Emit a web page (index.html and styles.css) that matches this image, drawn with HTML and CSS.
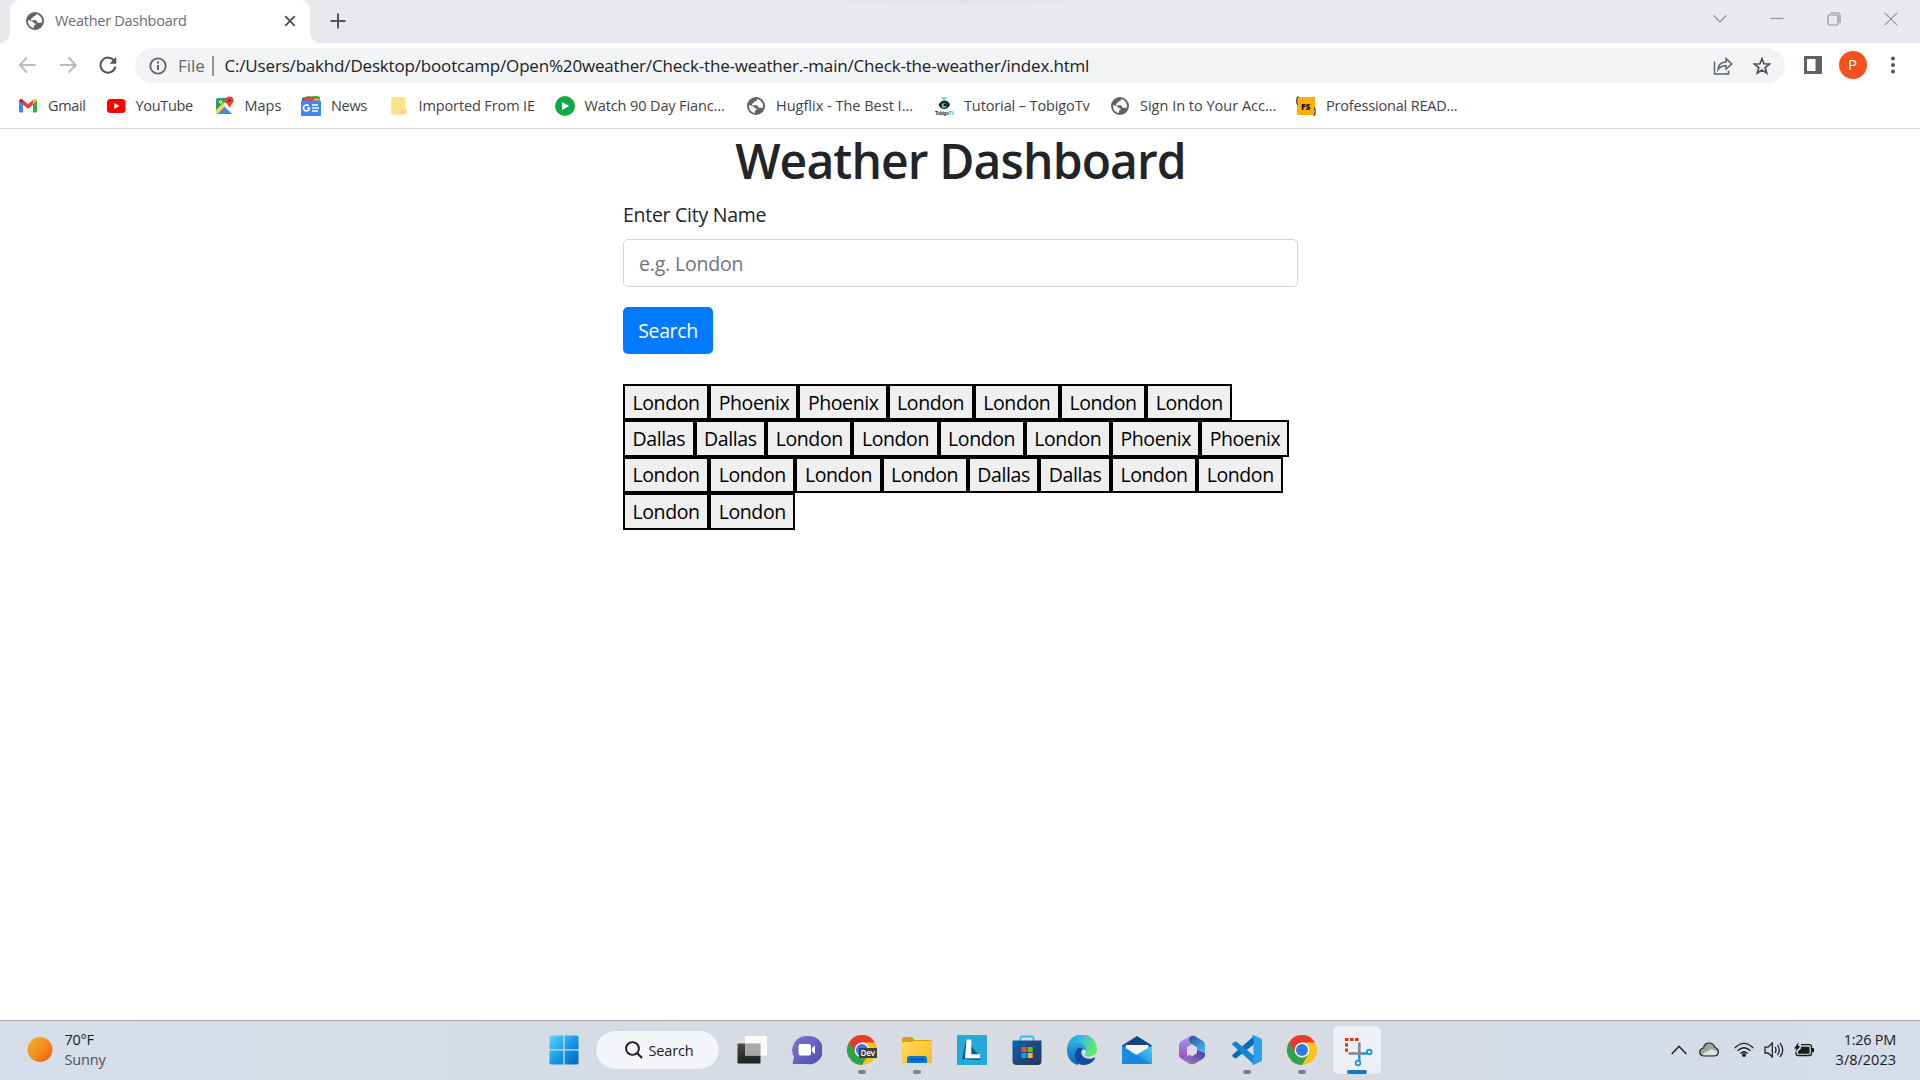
FILE: index.html
```html
<!DOCTYPE html>
<html lang="en">
<head>
<meta charset="utf-8">
<title>Weather Dashboard</title>
<link rel="stylesheet" href="styles.css">
</head>
<body>
<svg class="defs" width="0" height="0" aria-hidden="true">
  <defs>
    <symbol id="globe" viewBox="0 0 20 20">
      <circle cx="10" cy="10" r="9" fill="#5f6368"/>
      <path d="M11.2 2.9c-.3 1.4-1 2.2-2.4 2.4-.8.2-.8 1.100-1.300 1.700-.5.5-1.500.3-1.600 1.200 0 .9.9 1 1.900 1h2.700c.9 0 1.400.6 1.500 1.500.1.900 1 1.100 1.900 1.100h2.900a7.200 7.200 0 0 0-5.600-8.900zM2.900 9.300a7.200 7.200 0 0 0 6 7.800v-1.600c0-.8.6-1.200 1.300-1.400.7-.3.7-1.300 0-1.700l-1.700-.7c-.9-.5-.9-1.600-1.900-1.900z" fill="#fff"/>
    </symbol>
    <linearGradient id="win" x1="0" y1="0" x2="1" y2="1"><stop offset="0" stop-color="#5ad6fb"/><stop offset=".55" stop-color="#1496e4"/><stop offset="1" stop-color="#0067c5"/></linearGradient>
    <linearGradient id="sun" x1="0" y1="0" x2="1" y2="1"><stop offset="0" stop-color="#f2b632"/><stop offset=".5" stop-color="#f58d1e"/><stop offset="1" stop-color="#ee5c07"/></linearGradient>
    <linearGradient id="dark" x1="0" y1="0" x2="0" y2="1"><stop offset="0" stop-color="#4a4a4a"/><stop offset="1" stop-color="#1f1f1f"/></linearGradient>
    <linearGradient id="chat" x1="0" y1="0" x2="1" y2="1"><stop offset="0" stop-color="#8377c8"/><stop offset=".5" stop-color="#6660c4"/><stop offset="1" stop-color="#4f4db4"/></linearGradient>
    <linearGradient id="folder" x1="0" y1="0" x2="1" y2="1"><stop offset="0" stop-color="#ffdc62"/><stop offset="1" stop-color="#fdb81f"/></linearGradient>
    <linearGradient id="store" x1="0" y1="0" x2="1" y2="1"><stop offset="0" stop-color="#0c62ae"/><stop offset="1" stop-color="#273459"/></linearGradient>
    <linearGradient id="edgeTop" x1="0" y1="0" x2="1" y2=".3"><stop offset="0" stop-color="#2696dc"/><stop offset=".5" stop-color="#31c2dc"/><stop offset="1" stop-color="#66e46c"/></linearGradient>
    <linearGradient id="edgeLow" x1="0" y1="0" x2="0" y2="1"><stop offset="0" stop-color="#2ba8e4"/><stop offset="1" stop-color="#0f5fbd"/></linearGradient>
    <linearGradient id="mail" x1="1" y1="0" x2="0" y2="1"><stop offset="0" stop-color="#44d2fa"/><stop offset="1" stop-color="#157fdb"/></linearGradient>
    <linearGradient id="m1" x1="0" y1="0" x2="0" y2="1"><stop offset="0" stop-color="#a79af0"/><stop offset="1" stop-color="#9a4fbb"/></linearGradient>
    <linearGradient id="m2" x1="0" y1="0" x2=".6" y2="1"><stop offset="0" stop-color="#264f95"/><stop offset="1" stop-color="#4bc4fa"/></linearGradient>
    <linearGradient id="m3" x1="0" y1="1" x2="1" y2="0"><stop offset="0" stop-color="#b97fd0"/><stop offset="1" stop-color="#443c9b"/></linearGradient>
    <symbol id="chrome" viewBox="0 0 30 30">
      <circle cx="15" cy="15" r="15" fill="#fcc21b"/>
      <path d="M2 7.500 8.500 18.750 15 15 15 7.500H28A15 15 0 0 0 2 7.500z" fill="#e33b2e"/>
      <path d="M2 7.500 8.500 18.750Q12 22.500 15 22.500L21.500 18.750 15 30A15 15 0 0 1 2 7.500z" fill="#2ba24c"/>
      <circle cx="15" cy="15" r="7.400" fill="#fff"/><circle cx="15" cy="15" r="6" fill="#3079e8"/>
    </symbol>
  </defs>
</svg>

<div class="screen">
  <header class="browser">
    <div class="tabstrip">
      <div class="tab">
        <svg class="tab__icon" width="20" height="20"><use href="#globe"/></svg>
        <span class="tab__title">Weather Dashboard</span>
        <svg width="12" height="12" viewBox="0 0 12 12" stroke="#4c4f54" stroke-width="1.900"><path d="M1.200 1.200 10.800 10.800M10.800 1.200 1.200 10.800"/></svg>
      </div>
      <svg class="newtab" width="16" height="16" viewBox="0 0 16 16" stroke="#54575b" stroke-width="2"><path d="M8 .5V15.500M.5 8H15.500"/></svg>
      <div class="window-controls">
        <svg width="14" height="14" viewBox="0 0 14 14"><path d="m.7 3.500 6.300 6.500 6.300-6.500"/></svg>
        <svg width="14" height="14" viewBox="0 0 14 14"><path d="M.5 6.500h13"/></svg>
        <svg width="14" height="14" viewBox="0 0 14 14"><rect x="1" y="3" width="10" height="10" rx="1.500"/><path d="M3 1h7.500q2.500 0 2.500 2.500V11"/></svg>
        <svg width="14" height="14" viewBox="0 0 14 14"><path d="M.8.8 13.200 13.200M13.200.8.8 13.200"/></svg>
      </div>
    </div>
    <div class="toolbar">
      <div class="nav">
        <svg width="18" height="18" viewBox="0 0 18 18" stroke="#b9bbbe"><path d="M17.500 9H2M9 1.500 1.700 9 9 16.500"/></svg>
        <svg width="18" height="18" viewBox="0 0 18 18" stroke="#b9bbbe"><path d="M1 9h15.500M9.500 1.500 16.800 9l-7.300 7.500"/></svg>
        <svg width="18" height="18" viewBox="0 0 18 18" stroke="#505357"><path d="M15.300 5A7.500 7.500 0 1 0 16.400 10.500"/><path d="M17.300.8V7.700H10.400z" fill="#505357" stroke="none"/></svg>
      </div>
      <div class="address">
        <svg width="18" height="18" viewBox="0 0 18 18" fill="none" stroke="#5f6368" stroke-width="1.800"><circle cx="9" cy="9" r="7.700"/><path d="M9 8v5M9 4.600v2" stroke-width="2"/></svg>
        <span class="address__scheme">File</span>
        <span class="address__url">C:/Users/bakhd/Desktop/bootcamp/Open%20weather/Check-the-weather.-main/Check-the-weather/index.html</span>
        <svg class="address__share" width="20" height="18" viewBox="0 0 20 18" fill="none" stroke="#5f6368" stroke-width="1.500"><path d="M1.500 4.500V17H15.500V13.500M5 12.500C5.300 8 8.500 5.200 13 5V1.500L18.700 7 13 12V8.700C9.500 8.700 7 9.500 5 12.500z"/></svg>
        <svg width="18" height="18" viewBox="0 0 18 18" fill="none" stroke="#505357" stroke-width="1.700"><path d="m9 1.700 2 5.100 5.500.3-4.300 3.500 1.500 5.400L9 13l-4.700 3 1.500-5.400L1.500 7.100 7 6.800z"/></svg>
      </div>
      <svg class="panel-icon" width="18" height="18" viewBox="0 0 18 18"><path d="M0 0h18v18H0zM3 3v12h8.500V3z" fill="#5f6368" fill-rule="evenodd"/></svg>
      <span class="avatar">P</span>
      <svg class="menu-icon" width="4" height="18" viewBox="0 0 4 18" fill="#505357"><circle cx="2" cy="2.500" r="2"/><circle cx="2" cy="9" r="2"/><circle cx="2" cy="15.500" r="2"/></svg>
    </div>
    <nav class="bookmarks">
      <span class="bookmark bookmark--tight"><svg width="20" height="20" viewBox="0 0 20 20"><path d="M1 4v11.500q0 1 1 1h3V8z" fill="#4285f4"/><path d="M19 4v11.500q0 1-1 1h-3V8z" fill="#34a853"/><path d="m1 4.800 4 3.300v-4L3.500 3Q1.500 2.500 1 4.800z" fill="#c5221f"/><path d="m5 4.100 5 3.800 5-3.800v4.700l-5 3.900-5-3.900z" fill="#ea4335"/><path d="m19 4.800-4 3.300v-4L16.500 3q2-.5 2.500 1.800z" fill="#fbbc04"/></svg>Gmail</span>
      <span class="bookmark bookmark--tight"><svg width="20" height="20" viewBox="0 0 20 20"><rect x="1" y="3" width="18.500" height="14" rx="3.500" fill="#f00"/><path d="m8.300 7 5 3-5 3z" fill="#fff"/></svg>YouTube</span>
      <span class="bookmark"><svg width="20" height="20" viewBox="0 0 20 20"><rect x="1" y="2" width="16" height="16" rx="2" fill="#2a9d58"/><path d="m1 18 16-16v16z" fill="#e8e9eb"/><path d="m1.500 18 7.500-7.500 8 7.500z" fill="#4285f4"/><path d="m1 14 8-8 3.500 2L3 17.500 1 18z" fill="#fdd44a"/><path d="m8.500 8 8.500 9v-4l-6-6z" fill="#fff"/><path d="M7.500 5.800H5.900v.8h.8a1.300 1.300 0 1 1-.3-1.700" fill="none" stroke="#fff"/><path d="M14.500 12.500C14 9 10.500 7.500 10.500 4.500a4 4 0 0 1 8 0c0 3-3.500 4.500-4 8z" fill="#e84235"/><circle cx="14.500" cy="4.500" r="1.500" fill="#8c1f18"/></svg>Maps</span>
      <span class="bookmark bookmark--tight"><svg width="20" height="20" viewBox="0 0 20 20"><path d="M1 2 9 0v6H1z" fill="#188038"/><path d="M4 .8 16 0l3 1v5H5z" fill="#34a853"/><path d="m3 1.500 11-.8V6H3z" fill="#ea4335"/><path d="M13 2.500 19 3l-1 4h-6z" fill="#fbbc04"/><rect y="4.500" width="20" height="15.500" rx="1" fill="#4285f4"/><path d="M6 12h2.500a3 3 0 1 1-.9-2.200M11 9h6M11 12h7M11 15h6" fill="none" stroke="#fff" stroke-width="1.700"/></svg>News</span>
      <span class="bookmark bookmark--snug"><svg width="20" height="20" viewBox="0 0 20 20"><path d="M3.500 1h11q2 0 2 2v9.500h1v4.500q0 1.500-1.500 1.500H3.500q-1.500 0-1.500-1.500V3q0-2 1.500-2z" fill="#ffe28a"/><path d="M13.500 18v-3.500h3V18" fill="none" stroke="#f4cf62"/></svg>Imported From IE</span>
      <span class="bookmark bookmark--snug"><svg width="20" height="20" viewBox="0 0 20 20"><circle cx="10" cy="10" r="10" fill="#0cab45"/><path d="m7 6 7.200 4L7 14z" fill="#fff"/></svg>Watch 90 Day Fianc...</span>
      <span class="bookmark"><svg width="20" height="20"><use href="#globe"/></svg>Hugflix - The Best I...</span>
      <span class="bookmark bookmark--snug"><svg width="20" height="20" viewBox="0 0 20 20"><path d="M10 5V1M7.500 1.500 10 3l2.500-1.500" stroke="#37c6aa" fill="none"/><path d="M4.500 9Q7 4 11 4.500q4 .5 5 4.500-2 4-6 4-3.500 0-5.500-4z" fill="#17292d"/><circle cx="10" cy="9.500" r="2.500" fill="#36cfb6"/><circle cx="11" cy="9" r="1.300" fill="#111"/><text x="1" y="18.800" class="tobigo">Tobigo<tspan fill="#2bd0b0">TV</tspan></text></svg>Tutorial – TobigoTv</span>
      <span class="bookmark"><svg width="20" height="20"><use href="#globe"/></svg>Sign In to Your Acc...</span>
      <span class="bookmark bookmark--wide"><svg width="20" height="20" viewBox="0 0 20 20"><path d="M1 1h18v18H1z" fill="#ffb000"/><path d="M2.500.5q-1.500 0-1.500 2V4L.3 5 1 6v1.500q0 1 1 1M18 11.500q1 0 1 1.500v1.500l.7 1-.7 1V18q0 1.500-1.500 1.500" fill="none" stroke="#171717"/><text x="5" y="13.500" class="fs">FS</text></svg>Professional READ...</span>
    </nav>
  </header>

  <main class="page">
    <div class="column">
      <h1 class="heading">Weather Dashboard</h1>
      <label class="label" for="city">Enter City Name</label>
      <input class="field" id="city" type="text" placeholder="e.g. London">
      <button class="search" type="button">Search</button>
      <div class="history">
        <div class="history__row"><button class="city city--london">London</button><button class="city city--phoenix">Phoenix</button><button class="city city--phoenix">Phoenix</button><button class="city city--london">London</button><button class="city city--london">London</button><button class="city city--london">London</button><button class="city city--london">London</button></div>
        <div class="history__row"><button class="city city--dallas">Dallas</button><button class="city city--dallas">Dallas</button><button class="city city--london">London</button><button class="city city--london">London</button><button class="city city--london">London</button><button class="city city--london">London</button><button class="city city--phoenix">Phoenix</button><button class="city city--phoenix">Phoenix</button></div>
        <div class="history__row"><button class="city city--london">London</button><button class="city city--london">London</button><button class="city city--london">London</button><button class="city city--london">London</button><button class="city city--dallas">Dallas</button><button class="city city--dallas">Dallas</button><button class="city city--london">London</button><button class="city city--london">London</button></div>
        <div class="history__row"><button class="city city--london">London</button><button class="city city--london">London</button></div>
      </div>
    </div>
  </main>

  <footer class="taskbar">
    <div class="weather">
      <svg width="26" height="26" viewBox="0 0 26 26"><circle cx="13" cy="12.500" r="12.500" fill="url(#sun)"/></svg>
      <div class="weather__text"><span class="weather__temp">70°F</span><span class="weather__sky">Sunny</span></div>
    </div>
    <div class="apps">
      <div class="app app--start"><svg width="30" height="30" viewBox="0 0 30 30"><path d="M.5 2q0-1.500 1.500-1.500h12.300v13.800H.5zM15.600.5H28q1.500 0 1.500 1.500v12.300H15.600zM.5 15.600h13.800v13.900H2q-1.500 0-1.500-1.500zM15.600 15.600h13.900V28q0 1.500-1.500 1.500H15.600z" fill="url(#win)"/></svg></div>
      <div class="pill"><svg width="18" height="18" viewBox="0 0 18 18" fill="none" stroke="#1b1b1b" stroke-width="1.900"><circle cx="7.500" cy="7.500" r="6.400"/><path d="m12 12 5 5"/></svg><span class="pill__text">Search</span></div>
      <div class="app"><svg width="30" height="30" viewBox="0 0 30 30"><rect x=".5" y="8.500" width="23" height="20" rx="1" fill="url(#dark)"/><rect x="8" y="1" width="22" height="19.500" rx="1" fill="#fff" fill-opacity=".85"/><path d="M8 8.500h15.500v12H8z" fill="#a9a9a7"/></svg></div>
      <div class="app"><svg width="30" height="30" viewBox="0 0 30 30"><path d="M15 1a14.200 14.200 0 1 1-1 28H1.500q-1.200 0-.8-1.200L2 22A14.200 14.200 0 0 1 15 1z" fill="url(#chat)"/><rect x="6.500" y="9" width="12.500" height="11.500" rx="2" fill="#fff"/><path d="m20 13 3-2.500v8.500l-3-2.500z" fill="#fff"/></svg></div>
      <div class="app app--running"><svg width="30" height="30" viewBox="0 0 30 30"><use href="#chrome"/><rect x="12" y="13" width="18" height="10" fill="#3c4043"/><text x="13.400" y="20.800" class="dev">Dev</text></svg></div>
      <div class="app app--running"><svg width="30" height="30" viewBox="0 0 30 30"><path d="M0 4q0-2 2-2h8l2.500 3H28q2 0 2 2v5H0z" fill="#dda108"/><path d="M0 8.500Q0 7 2 7h8l3-1h16q1 0 1 1.500v19.500q0 1-1 1H1q-1 0-1-1z" fill="url(#folder)"/><path d="M5 28v-4.500q0-2.500 2.500-2.500h15q2.500 0 2.500 2.500V28z" fill="#0b79cf"/><path d="M8 24.500h14" stroke="#054785" stroke-width="1.500"/></svg></div>
      <div class="app"><svg width="30" height="30" viewBox="0 0 30 30"><path d="M0 0h30v30H0z" fill="#25a9da"/><path d="m9 5-4 19 18.500 1-1-4z" fill="#075d8b"/><path d="M9.500 4.500h4.800v14.800H23v4H8z" fill="#fff"/></svg></div>
      <div class="app"><svg width="30" height="30" viewBox="0 0 30 30"><path d="M8.500 6V3q0-1.500 1.500-1.500h10q1.500 0 1.500 1.500v3" fill="none" stroke="#32bdef" stroke-width="1.800"/><path d="M.5 5.500h29V26q0 4-4 4h-21q-4 0-4-4z" fill="url(#store)"/><path d="M9.500 12H14.500v5h-5z" fill="#f25022"/><path d="M15.700 12h5v5h-5z" fill="#7fba00"/><path d="M9.500 18h5v5h-5z" fill="#00a4ef"/><path d="M15.700 18h5v5h-5z" fill="#ffb900"/></svg></div>
      <div class="app"><svg width="30" height="30" viewBox="0 0 30 30"><path d="M0 14.500A15 15 0 0 1 30 14c0 5-4 7.500-8.500 7.500-3.500 0-5-1.500-4-3 2-3 0-6.500-5-6.500z" fill="url(#edgeTop)"/><path d="M0 15C1 10 5 7.500 9.500 7.500c6 0 10 4 9.500 8-.3 1.500-1.500 2-1.500 3.300L11 30C4 28.500 0 22.500 0 15z" fill="url(#edgeLow)"/><path d="M12.500 12.500C6 15.500 6 25.500 13.500 29.800 19.500 31 25.500 28 28 23.500c.5-1-.3-1.200-1-.8-5 2.500-11 .8-12.500-3.400-1-2.500.2-5 1.500-6z" fill="#0e4e9a"/><path d="M16 14.500q3-.5 3 2-.3 1.300-1.300 2.300-.8 2 2.300 2.600-4.500 1-5.500-2.600-.5-2.800 1.500-4.300z" fill="#d7dbe3"/></svg></div>
      <div class="app"><svg width="30" height="30" viewBox="0 0 30 30"><path d="M0 10.500 15 1l15 9.500v3H0z" fill="#0f4887"/><path d="M3.500 10h23v10h-23z" fill="#f4f4f3"/><path d="M0 10.500 17 22 30 29H0z" fill="#1b8de0"/><path d="M30 10.500V29L13 20.800z" fill="url(#mail)"/><path d="M0 29 13.500 19 30 29z" fill="#1686dc" fill-opacity=".6"/></svg></div>
      <div class="app"><svg width="30" height="30" viewBox="0 0 30 30"><path d="M13.500 1 4 6.300Q2 7.500 2 10v10q0 2.500 2 3.500 2 1 4 0 2-1.200 2-3.500v-7.500l5-3.200L19 6V2Q16 0 13.500 1z" fill="url(#m1)"/><path d="M14.500 1q2-.6 4 .5L26 6q2 1.200 2 3.700V20q0 2-1.500 3.200L20 19v-6.500l-5-3.200Q12 7.500 12 4.500 12 2 14.500 1z" fill="url(#m2)"/><path d="M28 18v2q0 2.500-2 3.700l-8.500 5q-2.500 1.200-5 0L4 23.700 3 22.500q2.500 1.500 5 0l7-4.300 5-3z" fill="url(#m3)"/><path d="m15 9.300 5 3.200v5.700l-5 3-5-3v-5.700z" fill="#d8dbe2"/></svg></div>
      <div class="app app--running"><svg width="30" height="30" viewBox="0 0 30 30"><path d="m22 1 1 7.500L4.500 23q-1 .7-2 0L.6 21.500Q-.2 20.500.6 19.800z" fill="#0b69b4"/><path d="m22 29.500 1-8L4.500 6.800q-1-.6-2 0L.6 8.300q-.8 1 0 1.700z" fill="#1685cf"/><path d="M22 .3 29 3.500q1 .5 1 2v19q0 1.500-1 2l-7 3.300q-2 .3-3-1.200 2.500 1 2.500-1.600V3.300Q21.500.5 19 1.500q1-1.500 3-1.200z" fill="#2ba0ed"/></svg></div>
      <div class="app app--running"><svg width="30" height="30"><use href="#chrome"/></svg></div>
      <div class="app app--active"><svg class="snip" width="30" height="30" viewBox="0 0 30 30"><path d="M5 5H15" stroke="#fff" stroke-width="0"/><path d="M3 4.500H16.500" stroke="#d03f0b" stroke-width="3" stroke-dasharray="3.500 1.500"/><path d="M4.500 7.500V17.500" stroke="#d03f0b" stroke-width="3" stroke-dasharray="0 .7 3.200 1.500"/><path d="M17.300 7.500V20M6.500 18.500H21" stroke="#85898d" stroke-width="2.600"/><path d="M20.500 18.500H25M17.300 20v5" stroke="#1a92dc" stroke-width="2.400"/><circle cx="27.300" cy="17" r="2.300" fill="#eef1f5" stroke="#1a92dc" stroke-width="1.700"/><circle cx="16" cy="28" r="2.300" fill="#eef1f5" stroke="#1a92dc" stroke-width="1.700"/></svg></div>
    </div>
    <div class="tray">
      <svg width="16" height="10" viewBox="0 0 16 10" fill="none" stroke="#1b1b1b" stroke-width="1.400"><path d="m.7 9 7.300-7.800L15.300 9"/></svg>
      <svg width="20" height="15" viewBox="0 0 20 15"><path d="M4.500 14Q.8 13.500.8 10T4.500 6Q5.500 1 10 1t6 4.500Q19.300 6.500 19.300 10T15.500 14z" fill="#a1a1a1"/><path d="M4.500 13.500Q3 13 4 11.500L13 7l6 3q0 3.500-3.500 3.500z" fill="#e1e2e2"/><path d="M4.500 14Q.8 13.500.8 10T4.500 6Q5.500 1 10 1t6 4.500Q19.300 6.500 19.300 10T15.500 14z" fill="none" stroke="#222" stroke-width="1.200"/></svg>
      <svg width="20" height="15" viewBox="0 0 20 15" fill="none" stroke="#222" stroke-width="1.400"><path d="M.8 6Q10-3.300 19.200 6M3.600 8.800q6.400-6 12.800 0M6.400 11.500q3.600-3.500 7.200 0"/><circle cx="10" cy="13" r="1.300" fill="#222"/></svg>
      <svg width="20" height="16" viewBox="0 0 20 16" fill="none" stroke="#222" stroke-width="1.300"><path d="M1 5.200h3L8.300 1v14L4 11H1zM11 5q2 3 0 6M13.500 3q3.500 5 0 10M16 1q5.500 7 0 14"/></svg>
      <svg width="20" height="16" viewBox="0 0 20 16"><path d="M7 2.700h8.500q2 0 2 2v6.800q0 2-2 2H4q-2 0-2-2V10" fill="none" stroke="#1b1b1b" stroke-width="1.300"/><path d="M7 4.700h8.500v7H4V9.500l3-3z" fill="#1b1b1b"/><path d="M18 6h2v4h-2zM4.500.3 0 6.500h2.300L1.500 10 6.500 4H4z" fill="#1b1b1b"/></svg>
      <div class="clock"><span class="clock__time">1:26 PM</span><span>3/8/2023</span></div>
    </div>
  </footer>
</div>
</body>
</html>
```
FILE: styles.css
```css
* { box-sizing: border-box; }

body {
  margin: 0;
  background: #fff;
  color: #212529;
  font-family: "Open Sans", "Noto Sans", sans-serif;
}

svg { display: block; flex: none; }
.defs { position: absolute; }
button, input { font: inherit; }

.screen {
  display: flex;
  flex-direction: column;
  width: 1920px;
  height: 1080px;
  overflow: hidden;
}

/* Browser chrome */
.browser {
  flex: none;
  height: 129px;
  border-bottom: 1px solid #d8dadd;
}

.tabstrip {
  display: flex;
  height: 43px;
  padding-left: 10px;
  background:
    radial-gradient(ellipse 150px 7px at 960px 0, #dfe0e3, #e8e9ed) no-repeat,
    #e8e9ed;
}

.tab {
  position: relative;
  display: flex;
  align-items: center;
  width: 300px;
  padding: 0 14px 1px 15px;
  border-radius: 10px 10px 0 0;
  background: #fff;
}
.tab::before, .tab::after {
  content: "";
  position: absolute;
  bottom: 0;
  width: 10px;
  height: 10px;
}
.tab::before { left: -10px; background: radial-gradient(circle at 0 0, transparent 9.5px, #fff 10px); }
.tab::after { right: -10px; background: radial-gradient(circle at 100% 0, transparent 9.5px, #fff 10px); }
.tab__title {
  flex: 1;
  margin-left: 10px;
  padding-bottom: 2px;
  color: #6a6d72;
  font-size: 14.5px;
  letter-spacing: -.27px;
}
.newtab { margin: 13px 0 0 19.500px; }

.window-controls {
  display: flex;
  gap: 43px;
  margin: 12px 22px 0 auto;
  fill: none;
  stroke: #909296;
  stroke-width: 1.200;
}

.toolbar {
  display: flex;
  align-items: center;
  height: 44px;
  padding-right: 25.500px;
}
.nav {
  display: flex;
  gap: 22.500px;
  width: 135px;
  padding-left: 18px;
  fill: none;
  stroke-width: 2;
}
.address {
  display: flex;
  align-items: center;
  width: 1650px;
  height: 35px;
  margin-top: 1px;
  padding: 0 14px 0 13.500px;
  border-radius: 18px;
  background: #f1f3f4;
  font-size: 17px;
}
.address__scheme {
  width: 35.500px;
  height: 20px;
  margin-left: 11.500px;
  border-right: 2px solid #94979b;
  color: #64676c;
  line-height: 19px;
}
.address__url {
  margin-left: 11px;
  padding-bottom: 1px;
  color: #202124;
  letter-spacing: -.178px;
}
.address__share { margin: 0 20px 0 auto; }
.panel-icon { margin-left: 18.500px; }
.avatar {
  width: 28px;
  height: 28px;
  margin: 0 24px 0 17px;
  border-radius: 50%;
  background: #f4511e;
  color: #fff;
  font-size: 15px;
  line-height: 27px;
  text-align: center;
}

.bookmarks {
  display: grid;
  grid-template-columns: 87.500px 109px 86.500px 87.500px 166px 191.500px 188px 176px 186px 180px;
  height: 37px;
  padding-left: 18px;
  color: #3f4246;
  font-size: 14.500px;
  line-height: 20px;
  white-space: nowrap;
}
.bookmark {
  display: flex;
  align-items: center;
  gap: 10px;
}
.bookmark--tight { letter-spacing: -.33px; }
.bookmark--snug { letter-spacing: -.12px; }
.bookmark--wide { letter-spacing: -.18px; }
.tobigo { font: 700 4.800px "Liberation Sans", sans-serif; fill: #222; letter-spacing: -.3px; }
.fs { font: 800 8.500px "Open Sans", sans-serif; fill: #171717; letter-spacing: 0; }

/* Page content */
.page { flex: 1; }
.column {
  width: 675px;
  margin: 0 0 0 623px;
  font-size: 19.500px;
}
.heading {
  margin: 2px 0 10px;
  font-size: 48px;
  font-weight: 600;
  line-height: 60px;
  letter-spacing: -.88px;
  text-align: center;
}
.label {
  display: block;
  height: 30px;
  margin-bottom: 8px;
  line-height: 28px;
  letter-spacing: -.27px;
}
.field {
  display: block;
  width: 100%;
  height: 48px;
  margin-bottom: 20px;
  padding: 0 15px;
  border: 1px solid #ced4da;
  border-radius: 5px;
  letter-spacing: -.18px;
}
.field::placeholder { color: #6c757d; opacity: 1; }
.search {
  display: block;
  width: 90px;
  height: 47px;
  margin-bottom: 30px;
  padding: 0;
  border: 0;
  border-radius: 5px;
  background: #007bff;
  color: #fff;
  letter-spacing: -.37px;
}
.history__row { display: flex; height: 36.400px; }
.city {
  height: 36.400px;
  padding: 0 0 0 7.500px;
  border: 2px solid #000;
  border-radius: 0;
  background: #efefef;
  color: #000;
  line-height: 31px;
  letter-spacing: -.4px;
  text-align: left;
}
.city--london { width: 86.200px; }
.city--phoenix { width: 89.200px; }
.city--dallas { width: 71.600px; }

/* Taskbar */
.taskbar {
  display: grid;
  grid-template-columns: 537px 1fr 250px;
  flex: none;
  height: 60px;
  border-top: 1px solid #a9acb2;
  background: linear-gradient(90deg, #d5deea, #d6dce5 30%, #d8dbe2 55%, #d5dbe6 80%, #d5ddea);
  font-size: 14.500px;
}
.weather {
  display: flex;
  align-items: center;
  gap: 11.500px;
  padding: 0 0 2px 27px;
}
.weather__text { display: flex; flex-direction: column; line-height: 20px; color: #4e545b; }
.weather__temp { color: #1b1b1b; letter-spacing: -.25px; }
.weather__sky { letter-spacing: -.15px; }

.apps { display: flex; align-items: center; }
.app {
  position: relative;
  display: flex;
  align-items: center;
  justify-content: center;
  width: 48px;
  height: 48px;
  margin: 0 7px 1px 0;
  border-radius: 5px;
}
.app--start { margin-left: 3px; }
.pill {
  display: flex;
  align-items: center;
  gap: 6px;
  width: 123px;
  height: 38px;
  margin: 0 9px 1px 1px;
  padding-left: 28.500px;
  border-radius: 19px;
  background: #f3f5f8;
  box-shadow: 0 0 1px #b9bec7;
  color: #1b1b1b;
  letter-spacing: -.15px;
}
.pill__text { padding-top: 1px; }
.app--running::after, .app--active::after {
  content: "";
  position: absolute;
  bottom: 0;
  width: 8px;
  height: 4px;
  border-radius: 2px;
  background: #7f8186;
}
.app--active { background: #eceff4; box-shadow: 0 0 1px #bfc4cc; }
.app--active::after { width: 20px; background: #0a78d4; }
.snip { overflow: visible; }
.dev { font: 600 8px "Open Sans", sans-serif; fill: #fff; }

.tray {
  display: flex;
  align-items: center;
  padding: 0 24px 2px 1px;
  color: #1b1b1b;
}
.tray svg { margin-right: 10px; }
.tray svg:nth-of-type(1) { margin-right: 12px; }
.tray svg:nth-of-type(2) { margin-right: 15px; }
.clock {
  display: flex;
  flex-direction: column;
  margin-left: auto;
  line-height: 20px;
  text-align: right;
}
.clock__time { letter-spacing: -.28px; }
```
